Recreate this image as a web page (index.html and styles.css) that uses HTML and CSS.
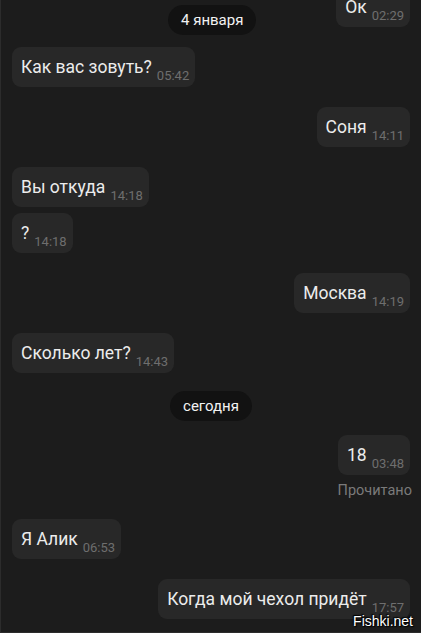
FILE: index.html
```html
<!DOCTYPE html>
<html lang="ru">
<head>
  <meta charset="UTF-8" />
  <title>Чат</title>
  <meta name="viewport" content="width=device-width, initial-scale=1.0" />
  <link rel="stylesheet" href="styles.css">
</head>
<body>
  <div class="screen">
    <div class="date-pill sticky">4 января</div>

    <div class="chat">
      <div class="msg out first">
        <div class="bubble"><span class="text">Ок</span><span class="time">02:29</span></div>
      </div>
      <div class="msg in">
        <div class="bubble"><span class="text">Как вас зовуть?</span><span class="time">05:42</span></div>
      </div>
      <div class="msg out">
        <div class="bubble"><span class="text">Соня</span><span class="time">14:11</span></div>
      </div>
      <div class="msg in">
        <div class="bubble"><span class="text">Вы откуда</span><span class="time">14:18</span></div>
      </div>
      <div class="msg in same">
        <div class="bubble"><span class="text">?</span><span class="time">14:18</span></div>
      </div>
      <div class="msg out">
        <div class="bubble"><span class="text">Москва</span><span class="time">14:19</span></div>
      </div>
      <div class="msg in">
        <div class="bubble"><span class="text">Сколько лет?</span><span class="time">14:43</span></div>
      </div>

      <div class="day">
        <div class="date-pill">сегодня</div>
      </div>

      <div class="msg out">
        <div class="bubble"><span class="text">18</span><span class="time">03:48</span></div>
        <div class="status">Прочитано</div>
      </div>
      <div class="msg in">
        <div class="bubble"><span class="text">Я Алик</span><span class="time">06:53</span></div>
      </div>
      <div class="msg out">
        <div class="bubble"><span class="text">Когда мой чехол придёт</span><span class="time">17:57</span></div>
      </div>
    </div>

    <div class="watermark">Fishki.net</div>
  </div>
</body>
</html>
```

FILE: styles.css
```css
:root {
  --bg: #1c1c1c;
  --bubble: #282828;
  --pill: #121212;
  --text: #ececec;
  --muted: #6e6e6e;
}

html, body {
  margin: 0;
  padding: 0;
  background: var(--bg);
}

body {
  font-family: Roboto, 'Noto Sans', sans-serif;
  color: var(--text);
}

.screen {
  position: relative;
  width: 421px;
  height: 633px;
  overflow: hidden;
  box-sizing: border-box;
  border-left: 1px solid #2c2c2c;
  border-bottom: 1px solid #2c2c2c;
}

.chat {
  display: flex;
  flex-direction: column;
  padding: 0 11px 0 11px;
  margin-top: -13px;
}

.msg {
  display: flex;
  flex-direction: column;
  margin-top: 20px;
}

.msg.first {
  margin-top: 0;
}

.msg.same {
  margin-top: 6px;
}

.msg.in {
  align-items: flex-start;
}

.msg.out {
  align-items: flex-end;
}

.bubble {
  display: flex;
  align-items: flex-end;
  background: var(--bubble);
  border-radius: 9px;
  padding: 9px 6px 9px 9px;
}

.bubble .text {
  font-size: 17.5px;
  line-height: 22px;
  white-space: nowrap;
}

.bubble .time {
  font-size: 13px;
  line-height: 1;
  color: var(--muted);
  margin-left: 5px;
  margin-bottom: -4px;
}

.status {
  font-size: 14.5px;
  color: #7a7a7a;
  margin-top: 7px;
  margin-right: -2px;
}

.day {
  display: flex;
  justify-content: center;
  margin-top: 18px;
}

.day + .msg {
  margin-top: 14px;
}

.date-pill {
  background: var(--pill);
  color: #f2f2f2;
  font-size: 15px;
  line-height: 30px;
  padding: 0 13px;
  border-radius: 15px;
}

.sticky {
  position: absolute;
  top: 5px;
  left: 167px;
  z-index: 2;
}

.watermark {
  position: absolute;
  right: 8px;
  bottom: 3px;
  font-family: 'Liberation Sans', Arial, sans-serif;
  font-size: 14px;
  color: #fff;
  text-shadow: 0 0 2px #000, 1px 1px 1px #000, -1px -1px 1px #000;
}
```
